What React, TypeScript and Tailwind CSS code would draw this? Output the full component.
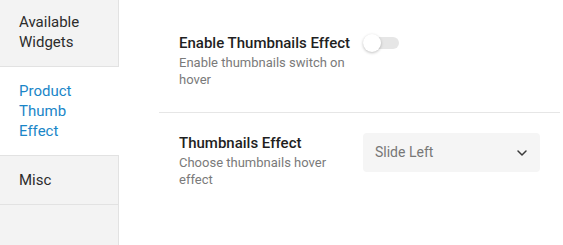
import React, { useState } from 'react';
import { ChevronDown } from 'lucide-react';

const tabs = ['Available Widgets', 'Product Thumb Effect', 'Misc'];

export default function App() {
  const [active, setActive] = useState(1);
  const [enabled, setEnabled] = useState(false);

  return (
    <div className="flex h-[245px] w-[563px] bg-white font-['Roboto',sans-serif]">
      {/* Sidebar */}
      <div className="flex w-[119px] shrink-0 flex-col bg-[#f3f3f3]">
        {tabs.map((tab, i) => (
          <button
            key={tab}
            onClick={() => setActive(i)}
            className={
              'border-b border-[#e2e2e2] pl-[19px] pr-4 text-left text-[15px] leading-5 ' +
              (i === 0 ? 'pt-[12px] pb-[14px] ' : 'py-[14px] ') +
              (i === active ? 'bg-white text-[#1a86c8]' : 'border-r text-[#2c2c2c]')
            }
          >
            {tab}
          </button>
        ))}
        <div className="flex-1 border-r border-[#e2e2e2]" />
      </div>

      {/* Settings */}
      <div className="flex-1 pt-3 pl-10 pr-[3px]">
        <div className="flex items-start border-b border-[#e6e6e6] px-5 pt-[21px] pb-[24px]">
          <div className="mr-2 w-[176px] shrink-0">
            <div className="text-[15px] font-medium leading-5 text-[#1f1f1f]">Enable Thumbnails Effect</div>
            <div className="mt-[1px] text-[13px] leading-[17px] text-[#7a7a7a]">Enable thumbnails switch on hover</div>
          </div>
          <button
            onClick={() => setEnabled(!enabled)}
            className="relative mt-[1px] h-[18px] w-[36px]"
          >
            <span className={'absolute top-[3px] left-0 h-[12px] w-[36px] rounded-full ' + (enabled ? 'bg-[#9fd0ee]' : 'bg-[#e6e6e6]')} />
            <span
              className={
                'absolute top-0 h-[18px] w-[18px] rounded-full shadow-[0_1px_3px_rgba(0,0,0,0.25)] ' +
                (enabled ? 'left-[18px] bg-[#1a86c8]' : 'left-0 bg-white')
              }
            />
          </button>
        </div>

        <div className="flex items-start px-5 pt-[20px]">
          <div className="mr-2 w-[176px] shrink-0">
            <div className="text-[15px] font-medium leading-5 text-[#1f1f1f]">Thumbnails Effect</div>
            <div className="mt-[1px] text-[13px] leading-[17px] text-[#7a7a7a]">Choose thumbnails hover effect</div>
          </div>
          <div className="flex h-[39px] w-[177px] items-center justify-between rounded-[4px] bg-[#f5f5f5] pl-3 pr-[10px]">
            <span className="text-[14px] text-[#777777]">Slide Left</span>
            <ChevronDown size={16} strokeWidth={2.25} className="text-[#3a3a3a]" />
          </div>
        </div>
      </div>
    </div>
  );
}
